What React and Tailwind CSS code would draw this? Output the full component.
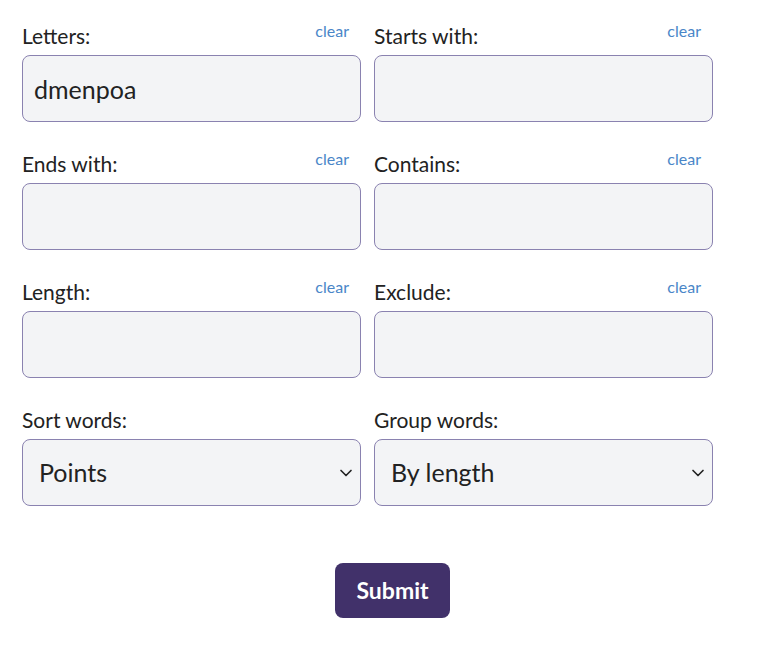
import { ChevronDown } from "lucide-react"

const font = { fontFamily: '"Source Sans Pro", Lato, "Noto Sans", sans-serif' }

function Field({ label, value, clear }) {
  return (
    <div className="flex flex-col">
      <div className="h-[55px] flex items-end justify-between pb-[7px]">
        <span className="text-[21px] leading-6 text-[#222]">{label}</span>
        {clear && <span className="text-[16px] leading-5 text-[#4a86c8] mb-[7px] mr-3">clear</span>}
      </div>
      <input
        defaultValue={value}
        className="h-[67px] w-full rounded-lg border border-[#8a82b0] bg-[#f3f4f6] px-[11px] text-[25px] text-[#222] outline-none"
      />
    </div>
  )
}

function SelectField({ label, value }) {
  return (
    <div className="flex flex-col">
      <div className="h-[55px] flex items-end pb-[7px]">
        <span className="text-[21px] leading-6 text-[#222]">{label}</span>
      </div>
      <div className="h-[67px] w-full rounded-lg border border-[#8a82b0] bg-[#f3f4f6] pl-[16px] pr-[4px] flex items-center justify-between">
        <span className="text-[25px] text-[#222]">{value}</span>
        <ChevronDown size={20} strokeWidth={2} className="text-[#222]" />
      </div>
    </div>
  )
}

export default function App() {
  return (
    <div className="bg-white min-h-[660px] pl-[22px]" style={font}>
      <div className="w-[741px]">
        <div className="grid grid-cols-[339px_339px] gap-x-[13px] gap-y-[6px]">
          <Field label="Letters:" value="dmenpoa" clear />
          <Field label="Starts with:" clear />
          <Field label="Ends with:" clear />
          <Field label="Contains:" clear />
          <Field label="Length:" clear />
          <Field label="Exclude:" clear />
          <SelectField label="Sort words:" value="Points" />
          <SelectField label="Group words:" value="By length" />
        </div>
        <div className="flex justify-center mt-[57px]">
          <button className="w-[115px] h-[55px] rounded-lg bg-[#41316a] text-white text-[23px] font-bold">
            Submit
          </button>
        </div>
      </div>
    </div>
  )
}
